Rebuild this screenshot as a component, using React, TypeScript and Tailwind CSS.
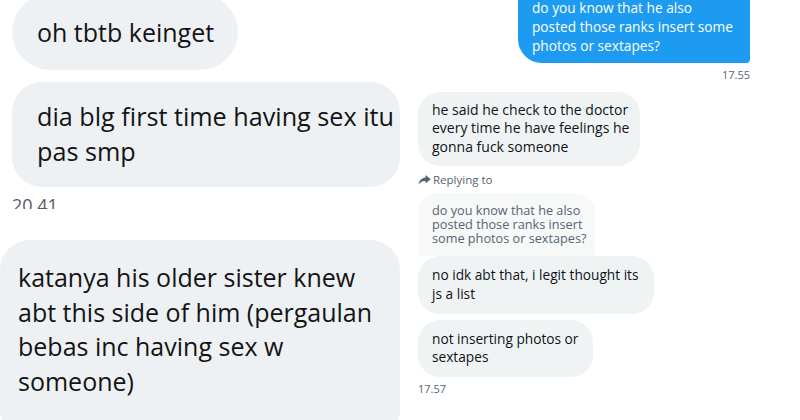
import React from "react";

function ReplyArrow() {
  return (
    <svg viewBox="0 0 24 24" className="h-[13px] w-[13px] fill-[#536471]">
      <path d="M14 3.5 L23.5 11.5 L14 19.5 V15 C8.5 14.8 4.4 16.8 1 21.5 C2.2 14 6.4 9.4 14 8.4 Z" />
    </svg>
  );
}

export default function App() {
  return (
    <div className="flex h-[420px] w-[800px] overflow-hidden bg-white font-['Open_Sans',sans-serif]">
      {/* Left - first chat */}
      <div className="flex w-[400px] shrink-0 flex-col overflow-hidden text-[25px] text-[#141414]">
        <div className="ml-3 mt-[-6px] flex h-[76px] w-[226px] shrink-0 items-center rounded-full bg-[#eef1f3] pl-[25px] leading-[35px] whitespace-nowrap">
          oh tbtb keinget
        </div>
        <div className="ml-3 mt-3 w-[388px] shrink-0 rounded-[30px] bg-[#eef1f3] pb-[18px] pl-[25px] pt-[17px] text-[25.2px] leading-[35px] whitespace-nowrap">
          dia blg first time having sex itu
          <br />
          pas smp
        </div>
        <div className="h-[22px] shrink-0 overflow-hidden pl-3 pt-[8px] text-[18px] leading-[20px] text-[#555b61]">
          20.41
        </div>
        <div className="mt-[31px] h-[200px] w-[400px] shrink-0 rounded-[30px] bg-[#eef1f3] pl-[18px] pt-[20px] leading-[34.7px] whitespace-nowrap">
          katanya his older sister knew
          <br />
          abt this side of him (pergaulan
          <br />
          bebas inc having sex w
          <br />
          someone)
        </div>
      </div>

      {/* Right - second chat */}
      <div className="flex flex-1 flex-col pl-[18px] text-[14px] text-[#0f1419]">
        <div className="ml-[100px] mt-[-22px] w-[232px] shrink-0 rounded-[24px] rounded-br-[4px] bg-[#1d9bf0] pb-[8px] pl-[14px] pt-[20px] text-[13.7px] leading-[19px] text-white whitespace-nowrap">
          do you know that he also
          <br />
          posted those ranks insert some
          <br />
          photos or sextapes?
        </div>
        <div className="ml-[100px] mt-[4.5px] w-[232px] text-right text-[11px] leading-[14px] text-[#536471]">
          17.55
        </div>
        <div className="mt-[10px] w-[222px] shrink-0 rounded-[22px] bg-[#eff3f4] pb-[10px] pl-[14px] pt-[9px] leading-[18.5px] whitespace-nowrap">
          he said he check to the doctor
          <br />
          every time he have feelings he
          <br />
          gonna fuck someone
        </div>
        <div className="mt-[5.5px] flex h-4 items-center gap-[2px] text-[11.5px] text-[#536471]">
          <ReplyArrow />
          <span>Replying to</span>
        </div>
        <div className="mt-[5px] w-[177px] shrink-0 rounded-t-[20px] bg-[#f7f9f9] pb-[11px] pl-[14px] pt-[10px] text-[12.7px] leading-[14.2px] text-[#536471] whitespace-nowrap">
          do you know that he also
          <br />
          posted those ranks insert
          <br />
          some photos or sextapes?
        </div>
        <div className="w-[236px] shrink-0 rounded-[22px] bg-[#eff3f4] pb-[10.7px] pl-[14px] pt-[10px] text-[13.7px] leading-[18.5px] whitespace-nowrap">
          no idk abt that, i legit thought its
          <br />
          js a list
        </div>
        <div className="mt-[6px] w-[175px] shrink-0 rounded-[22px] bg-[#eff3f4] pb-[10.7px] pl-[14px] pt-[10px] text-[13.7px] leading-[18.5px] whitespace-nowrap">
          not inserting photos or
          <br />
          sextapes
        </div>
        <div className="mt-[4.6px] text-[11px] leading-[14px] text-[#536471]">17.57</div>
      </div>
    </div>
  );
}
